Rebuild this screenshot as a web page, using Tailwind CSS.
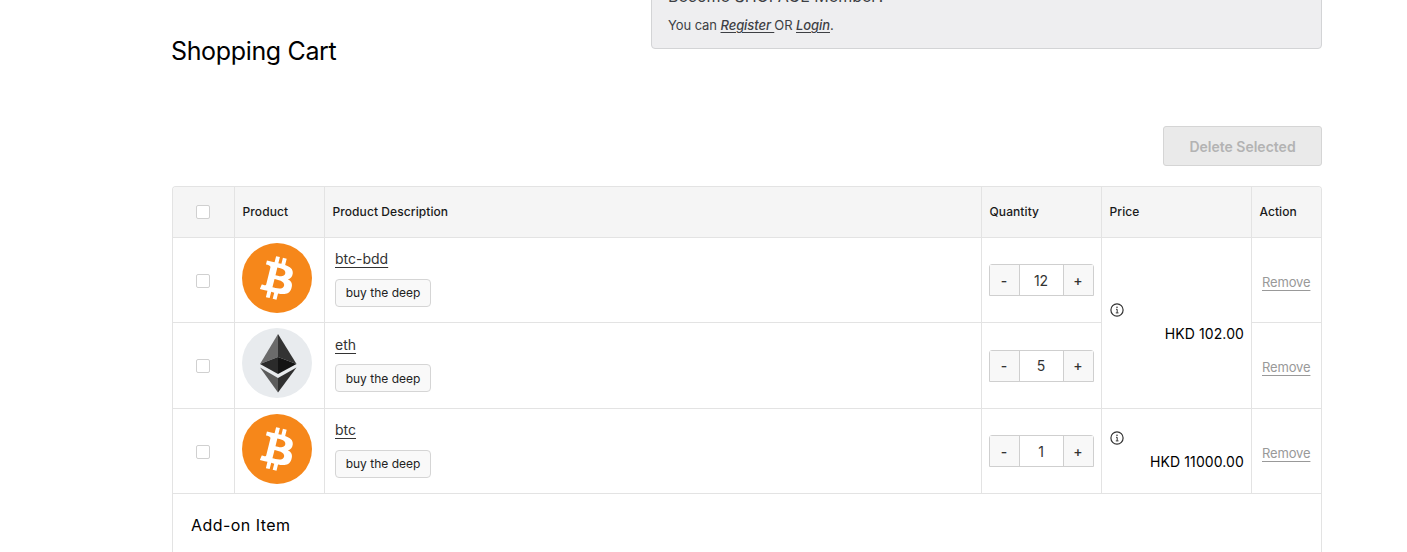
<!DOCTYPE html>
<html lang="en">
  <head>
    <meta charset="UTF-8" />
    <meta name="viewport" content="width=device-width, initial-scale=1.0" />
    <title>Shopping Cart</title>
    <script src="https://cdn.jsdelivr.net/npm/@tailwindcss/browser@4"></script>
  </head>
  <body class="bg-white font-['Inter',sans-serif] text-black h-[552px] overflow-hidden">
    <!-- shared logos -->
    <svg class="hidden">
      <symbol id="btc" viewBox="0 0 32 32">
        <circle cx="16" cy="16" r="16" fill="#f6871a" />
        <path
          fill="#fff"
          d="M23.189 14.02c.314-2.096-1.283-3.223-3.465-3.975l.708-2.84-1.728-.43-.69 2.765c-.454-.114-.92-.22-1.385-.326l.695-2.783L15.596 6l-.708 2.839c-.376-.086-.746-.17-1.104-.26l.002-.009-2.384-.595-.46 1.846s1.283.294 1.256.312c.7.175.826.638.805 1.006l-.806 3.235c.048.012.11.03.18.057l-.183-.045-1.13 4.532c-.086.212-.303.531-.793.41.018.025-1.256-.313-1.256-.313l-.858 1.978 2.25.561c.418.105.828.215 1.231.318l-.715 2.872 1.727.43.708-2.84c.472.127.93.245 1.378.357l-.706 2.828 1.728.43.715-2.866c2.948.558 5.164.333 6.097-2.333.752-2.146-.037-3.385-1.588-4.192 1.13-.26 1.98-1.003 2.207-2.538zm-3.95 5.538c-.533 2.147-4.148.986-5.32.695l.95-3.805c1.172.293 4.929.872 4.37 3.11zm.535-5.569c-.487 1.953-3.495.96-4.47.717l.86-3.45c.975.243 4.118.696 3.61 2.733z"
        />
      </symbol>
      <symbol id="eth" viewBox="0 0 70 70">
        <circle cx="35" cy="35" r="35" fill="#e8ebee" />
        <path d="M36 6v23L18 36z" fill="#6b6b6b" />
        <path d="M36 6v23l18.500 7z" fill="#333" />
        <path d="M18 36l18-7v17z" fill="#2b2b2b" />
        <path d="M54.500 36L36 29v17z" fill="#141414" />
        <path d="M18 39.500l18 10.500v14.500z" fill="#5c5c5c" />
        <path d="M54.500 39.500L36 50v14.500z" fill="#303030" />
      </symbol>
      <symbol id="info" viewBox="0 0 14 14">
        <circle cx="7" cy="7" r="6.100" fill="none" stroke="#333" stroke-width="1.200" />
        <path d="M6 6.300h1.200v3.500M5.800 9.900h2.700" fill="none" stroke="#333" stroke-width="1" />
        <circle cx="7" cy="4.200" r=".8" fill="#333" />
      </symbol>
    </svg>

    <main class="ml-[172px] w-[1150px]">
      <header class="flex justify-between h-[126px]">
        <h1 class="-ml-px pt-[33px] text-[25px] leading-9 tracking-[-0.35px] whitespace-nowrap">Shopping Cart</h1>
        <div class="w-[671px] h-[69px] -mt-5 pl-4 border border-[#d3d4d6] rounded bg-[#eeeef0] text-[#3d3f44]">
          <h2 class="mt-[3px] h-6 text-base leading-6">Become SHOPAGE Member?</h2>
          <p class="mt-[7px] text-[13px] leading-5 tracking-[-0.08px]">You can <a href="#" class="italic font-medium underline underline-offset-2">Register </a>OR <a href="#" class="italic font-medium underline underline-offset-2">Login</a>.</p>
        </div>
      </header>

      <div class="flex justify-end">
        <button class="w-[159px] h-10 pt-0.5 border border-[#d5d5d5] rounded-[3px] bg-[#eaeaea] text-[#b3b3b3] text-sm font-semibold" disabled>Delete Selected</button>
      </div>

      <section class="mt-5 border border-b-0 border-[#e3e3e3] rounded-t h-[380px] overflow-hidden">
        <div class="grid grid-cols-[62px_90px_657px_120px_150px_69px] grid-rows-[51px_85px_86px_85px] *:border-[#e3e3e3] *:border-b *:border-r">
          <!-- header row -->
          <div class="bg-[#f5f5f5] pl-[23px] flex items-center"><span class="size-3.5 border border-[#d0d0d0] rounded-xs bg-white"></span></div>
          <div class="bg-[#f5f5f5] pl-[7.5px] flex items-center text-xs font-medium text-[#1a1a1a] tracking-[0.1px]">Product</div>
          <div class="bg-[#f5f5f5] pl-[7.5px] flex items-center text-xs font-medium text-[#1a1a1a] tracking-[0.08px]">Product Description</div>
          <div class="bg-[#f5f5f5] pl-[7.5px] flex items-center text-xs font-medium text-[#1a1a1a] tracking-[0.1px]">Quantity</div>
          <div class="bg-[#f5f5f5] pl-[7.5px] flex items-center text-xs font-medium text-[#1a1a1a] tracking-[0.1px]">Price</div>
          <div class="bg-[#f5f5f5] pl-[7.5px] flex items-center text-xs font-medium text-[#1a1a1a] tracking-[0.05px] border-r-0!">Action</div>

          <!-- btc-bdd -->
          <div class="pl-[23px] pt-9"><span class="block size-3.5 border border-[#d0d0d0] rounded-xs bg-white"></span></div>
          <div class="pl-[7px] pt-[5px]"><svg class="size-[70px]"><use href="#btc" /></svg></div>
          <div class="pl-2.5 pt-[11px]">
            <a href="#" class="block w-fit h-5 text-sm leading-5 text-[#333] underline underline-offset-3">btc-bdd</a>
            <span class="mt-2.5 flex w-24 h-7 items-center justify-center border border-[#d5d5d5] rounded bg-[#f9f9f9] text-xs text-[#222]">buy the deep</span>
          </div>
          <div class="pl-[7px] pt-[26px]">
            <div class="flex w-[105px] h-8 border border-[#cfcfcf] rounded-t-[3px] text-sm text-[#333] *:flex *:items-center *:justify-center *:pt-0.5 *:pr-px">
              <button class="w-[29px] bg-[#f8f8f8] font-medium">-</button>
              <span class="w-[45px] border-x border-[#cfcfcf]">12</span>
              <button class="w-[29px] bg-[#f8f8f8] font-medium">+</button>
            </div>
          </div>
          <div class="row-span-2 pl-2 pr-[7px] pt-[65px]">
            <svg class="block size-3.5"><use href="#info" /></svg>
            <p class="mt-[7px] text-right text-sm leading-5 tracking-[0.1px]">HKD 102.00</p>
          </div>
          <div class="pl-2.5 pt-[34px] border-r-0!"><a href="#" class="block text-[13px] leading-5 tracking-[-0.15px] text-[#999] underline underline-offset-3">Remove</a></div>

          <!-- eth -->
          <div class="pl-[23px] pt-9"><span class="block size-3.5 border border-[#d0d0d0] rounded-xs bg-white"></span></div>
          <div class="pl-[7px] pt-[5px]"><svg class="size-[70px]"><use href="#eth" /></svg></div>
          <div class="pl-2.5 pt-3">
            <a href="#" class="block w-fit h-5 text-sm leading-5 text-[#333] underline underline-offset-3">eth</a>
            <span class="mt-[9px] pt-px flex w-24 h-7 items-center justify-center border border-[#d5d5d5] rounded bg-[#f9f9f9] text-xs text-[#222]">buy the deep</span>
          </div>
          <div class="pl-[7px] pt-[27px]">
            <div class="flex w-[105px] h-8 border border-[#cfcfcf] rounded-t-[3px] text-sm text-[#333] *:flex *:items-center *:justify-center *:pr-px">
              <button class="w-[29px] bg-[#f8f8f8] font-medium">-</button>
              <span class="w-[45px] border-x border-[#cfcfcf]">5</span>
              <button class="w-[29px] bg-[#f8f8f8] font-medium">+</button>
            </div>
          </div>
          <div class="pl-2.5 pt-[34px] border-r-0!"><a href="#" class="block text-[13px] leading-5 tracking-[-0.15px] text-[#999] underline underline-offset-3">Remove</a></div>

          <!-- btc -->
          <div class="pl-[23px] pt-9"><span class="block size-3.5 border border-[#d0d0d0] rounded-xs bg-white"></span></div>
          <div class="pl-[7px] pt-[5px]"><svg class="size-[70px]"><use href="#btc" /></svg></div>
          <div class="pl-2.5 pt-[11px]">
            <a href="#" class="block w-fit h-5 text-sm leading-5 text-[#333] underline underline-offset-3">btc</a>
            <span class="mt-2.5 flex w-24 h-7 items-center justify-center border border-[#d5d5d5] rounded bg-[#f9f9f9] text-xs text-[#222]">buy the deep</span>
          </div>
          <div class="pl-[7px] pt-[26px]">
            <div class="flex w-[105px] h-8 border border-[#cfcfcf] rounded-t-[3px] text-sm text-[#333] *:flex *:items-center *:justify-center *:pt-0.5 *:pr-px">
              <button class="w-[29px] bg-[#f8f8f8] font-medium">-</button>
              <span class="w-[45px] border-x border-[#cfcfcf]">1</span>
              <button class="w-[29px] bg-[#f8f8f8] font-medium">+</button>
            </div>
          </div>
          <div class="pl-2 pr-[7px] pt-[22px]">
            <svg class="block size-3.5"><use href="#info" /></svg>
            <p class="mt-[7px] text-right text-sm leading-5 tracking-[0.1px]">HKD 11000.00</p>
          </div>
          <div class="pl-2.5 pt-[34px] border-r-0!"><a href="#" class="block text-[13px] leading-5 tracking-[-0.15px] text-[#999] underline underline-offset-3">Remove</a></div>
        </div>
        <h3 class="pl-[18px] pt-[19px] text-base leading-6 tracking-[0.45px]">Add-on Item</h3>
      </section>
    </main>
  </body>
</html>
